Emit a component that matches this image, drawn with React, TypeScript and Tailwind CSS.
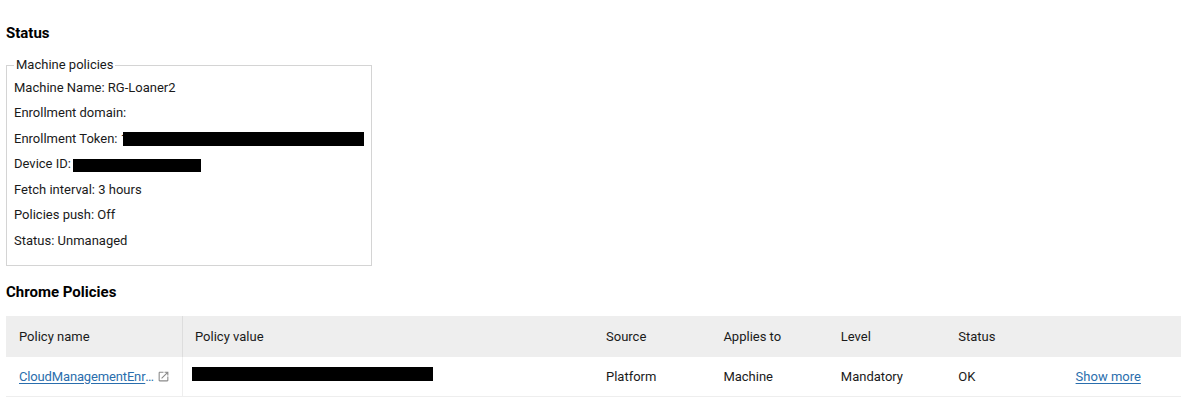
import React from 'react';

const Redacted = ({ className }: { className: string }) => (
  <span className={`inline-block bg-black ${className}`} />
);

const OpenInNew = () => (
  <svg viewBox="0 0 24 24" className="w-[13px] h-[13px] shrink-0 fill-[#8a8a8a]">
    <path d="M19 19H5V5h7V3H5c-1.11 0-2 .9-2 2v14c0 1.1.89 2 2 2h14c1.1 0 2-.9 2-2v-7h-2v7zM14 3v2h3.59l-9.83 9.83 1.41 1.41L19 6.41V10h2V3h-7z" />
  </svg>
);

const PolicyRow = ({ children }: { children: React.ReactNode }) => (
  <div className="h-[25.5px] flex items-center whitespace-pre">{children}</div>
);

const headers = ['Source', 'Applies to', 'Level', 'Status'];
const values = ['Platform', 'Machine', 'Mandatory', 'OK'];

export default function App() {
  return (
    <div className="w-[1181px] h-[409px] overflow-hidden bg-white pl-1.5 pt-[25px] text-[13px] leading-4 text-[#1a1a1a] font-['Roboto',sans-serif]">
      <h2 className="text-[15px] leading-4 font-bold text-black">Status</h2>

      <fieldset className="mt-4 w-[366px] h-[209px] border border-[#d4d4d4] pl-[7px] pr-[7px]">
        <legend className="px-[2px]">Machine policies</legend>
        <div className="mt-[2px]">
          <PolicyRow>Machine Name: RG-Loaner2</PolicyRow>
          <PolicyRow>Enrollment domain:</PolicyRow>
          <PolicyRow>
            Enrollment Token: 1<Redacted className="-ml-[5px] w-[241px] h-[14px]" />
          </PolicyRow>
          <PolicyRow>
            Device ID:<Redacted className="ml-[2px] mt-[2px] w-[128px] h-[13px]" />
          </PolicyRow>
          <PolicyRow>Fetch interval: 3 hours</PolicyRow>
          <PolicyRow>Policies push: Off</PolicyRow>
          <PolicyRow>Status: Unmanaged</PolicyRow>
        </div>
      </fieldset>

      <h2 className="mt-[18px] text-[15px] leading-4 font-bold text-black">Chrome Policies</h2>

      <div className="mt-4 w-[1175px] grid grid-cols-[177px_411px_repeat(5,1fr)]">
        <div className="h-[41px] pt-px flex items-center pl-[13px] bg-[#eeeeee] border-r border-[#dddddd]">Policy name</div>
        <div className="h-[41px] pt-px flex items-center pl-3 bg-[#eeeeee]">Policy value</div>
        {headers.map((h) => (
          <div key={h} className="h-[41px] pt-px flex items-center pl-3 bg-[#eeeeee]">{h}</div>
        ))}
        <div className="h-[41px] bg-[#eeeeee]" />

        <div className="h-10 flex items-center gap-px pl-[13px] border-r border-b border-[#eeeeee]">
          <a href="#" className="flex text-[#2a6ead] underline underline-offset-2">
            <span className="w-[137px] truncate tracking-[-0.15px]">CloudManagementEnrollmentToken</span>
          </a>
          <OpenInNew />
        </div>
        <div className="h-10 flex items-center pl-[9px] border-b border-[#eeeeee]">
          <Redacted className="mb-[6px] w-[241px] h-[14px]" />
        </div>
        {values.map((v) => (
          <div key={v} className="h-10 flex items-center pl-3 border-b border-[#eeeeee]">{v}</div>
        ))}
        <div className="h-10 flex items-center pl-3 border-b border-[#eeeeee]">
          <a href="#" className="text-[#2a6ead] underline underline-offset-2">Show more</a>
        </div>
      </div>
    </div>
  );
}
